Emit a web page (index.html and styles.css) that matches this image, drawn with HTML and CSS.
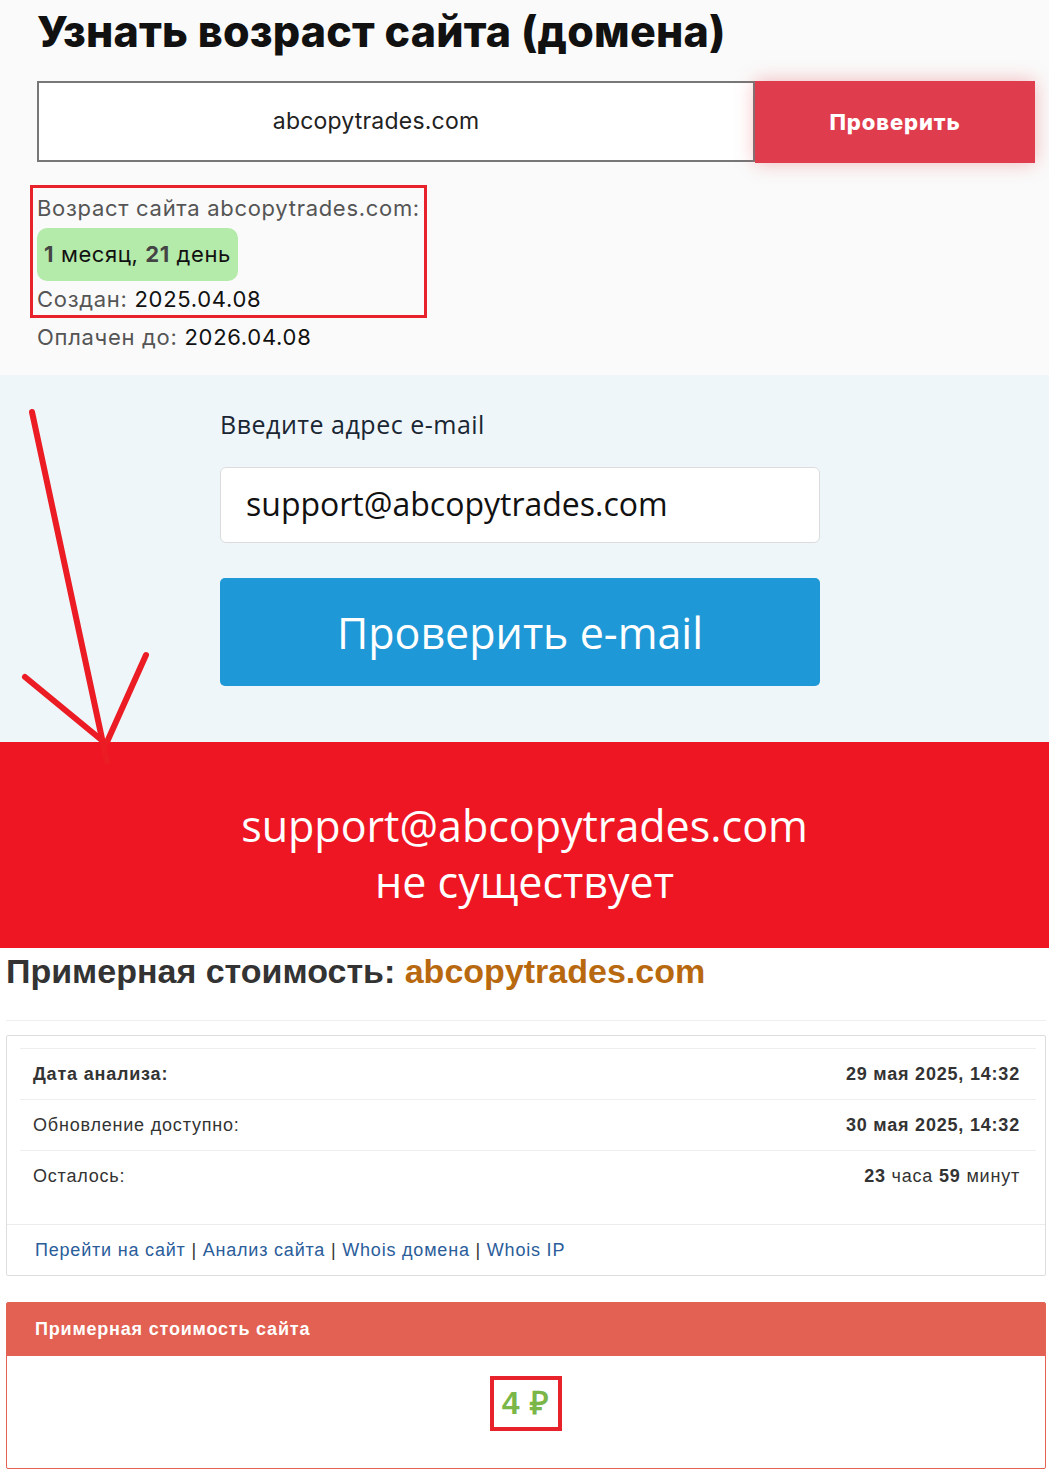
FILE: index.html
```html
<!DOCTYPE html>
<html lang="ru">
<head>
  <meta charset="UTF-8">
  <meta name="viewport" content="width=device-width, initial-scale=1.0">
  <title>Узнать возраст сайта</title>
  <link rel="stylesheet" href="styles.css">
</head>
<body>
  <div class="page">
    <section class="age-section">
      <h1>Узнать возраст сайта (домена)</h1>
      <div class="domain-form">
        <div class="domain-input">abcopytrades.com</div>
        <button class="domain-btn">Проверить</button>
      </div>
      <div class="age-result">
        <div class="age-line">Возраст сайта abcopytrades.com:</div>
        <div class="age-pill"><b>1</b> месяц, <b>21</b> день</div>
        <div class="age-line">Создан: <span class="val">2025.04.08</span></div>
      </div>
      <div class="age-line paid">Оплачен до: <span class="val">2026.04.08</span></div>
    </section>

    <section class="email-section">
      <div class="email-form">
        <div class="email-label">Введите адрес e-mail</div>
        <div class="email-input">support@abcopytrades.com</div>
        <button class="email-btn">Проверить e-mail</button>
      </div>
    </section>

    <section class="email-result">
      <div>support@abcopytrades.com</div>
      <div>не существует</div>
    </section>

    <section class="valuation">
      <h2>Примерная стоимость: <span class="domain">abcopytrades.com</span></h2>
      <hr class="divider">
      <div class="info-card">
        <div class="info-rows">
          <div class="info-row head"><span>Дата анализа:</span><span class="right">29 мая 2025, 14:32</span></div>
          <div class="info-row"><span>Обновление доступно:</span><span class="right">30 мая 2025, 14:32</span></div>
          <div class="info-row"><span>Осталось:</span><span class="right"><b>23</b> часа <b>59</b> минут</span></div>
        </div>
        <div class="info-links">
          <a href="#">Перейти на сайт</a> | <a href="#">Анализ сайта</a> | <a href="#">Whois домена</a> | <a href="#">Whois IP</a>
        </div>
      </div>

      <div class="price-panel">
        <div class="price-head">Примерная стоимость сайта</div>
        <div class="price-body">
          <span class="price">4 ₽</span>
        </div>
      </div>
    </section>

    <!-- стрелка поверх блоков -->
    <svg class="arrow" width="170" height="390" viewBox="0 0 170 390">
      <g stroke="#ec1c24" stroke-width="6" stroke-linecap="round" fill="none">
        <line x1="32" y1="32" x2="107" y2="382"/>
        <line x1="25" y1="297" x2="104" y2="362"/>
        <line x1="146" y1="275" x2="107" y2="362"/>
      </g>
    </svg>
  </div>
</body>
</html>
```

FILE: styles.css
```css
body {
  margin: 0;
  background-color: #fff;
}
.page {
  position: relative;
  width: 1049px;
}
.age-section {
  background-color: #fafafa;
  padding: 0 0 0 37px;
  height: 375px;
  box-sizing: border-box;
  font-family: Inter, "Open Sans", sans-serif;
  overflow: hidden;
}
h1 {
  margin: 0;
  padding-top: 3px;
  font-size: 43px;
  line-height: 56px;
  font-weight: 800;
  color: #111;
  letter-spacing: 0.2px;
}
.domain-form {
  display: flex;
  margin-top: 22px;
}
.domain-input {
  flex-shrink: 0;
  width: 718px;
  height: 81px;
  box-sizing: border-box;
  padding-right: 40px;
  border: 2px solid #777;
  background-color: #fff;
  text-align: center;
  font-size: 23px;
  letter-spacing: 0.2px;
  line-height: 77px;
  color: #222;
}
.domain-btn {
  flex-shrink: 0;
  width: 280px;
  height: 82px;
  border: none;
  background-color: #df3d4d;
  color: #fff;
  font-family: Inter, sans-serif;
  font-size: 22px;
  font-weight: 800;
  letter-spacing: 0.9px;
  box-shadow: 0 0 18px rgba(230, 60, 70, 0.35);
}
.age-result {
  display: inline-block;
  margin: 22px 0 0 -7px;
  padding: 6px 4px 2px 4px;
  border: 3px solid #e8222b;
}
.age-line {
  font-size: 22px;
  letter-spacing: 0.7px;
  line-height: 28px;
  color: #555;
}
.age-line .val {
  color: #111;
}
.age-pill {
  display: inline-block;
  margin: 6px 0 4px;
  padding: 0 7px;
  height: 53px;
  line-height: 53px;
  background-color: #b4eaaa;
  border-radius: 10px;
  font-size: 22px;
  letter-spacing: 0.6px;
  color: #111;
}
.age-pill b {
  color: #444;
}
.paid {
  margin-top: 5px;
}
.email-section {
  background-color: #eef6fa;
  height: 367px;
  padding-top: 34px;
  box-sizing: border-box;
}
.email-form {
  width: 600px;
  margin-left: 220px;
  font-family: "Open Sans", sans-serif;
}
.email-label {
  font-size: 25px;
  letter-spacing: 0.5px;
  line-height: 30px;
  color: #1a2633;
}
.email-input {
  margin-top: 28px;
  height: 76px;
  box-sizing: border-box;
  background-color: #fff;
  border: 1px solid #dcdcdc;
  border-radius: 6px;
  padding-left: 25px;
  font-size: 32px;
  line-height: 72px;
  color: #111;
}
.email-btn {
  margin-top: 35px;
  width: 600px;
  height: 108px;
  border: none;
  border-radius: 5px;
  background-color: #1e98d6;
  color: #fff;
  font-family: "Open Sans", sans-serif;
  font-size: 43px;
}
.email-result {
  background-color: #ee1622;
  height: 206px;
  padding-top: 56px;
  box-sizing: border-box;
  text-align: center;
  color: #fff;
  font-family: "Open Sans", sans-serif;
  font-size: 43px;
  line-height: 56px;
}
.valuation {
  font-family: "Liberation Sans", Arial, sans-serif;
  padding: 0 3px 0 6px;
}
.valuation h2 {
  margin: 0;
  padding-top: 5px;
  font-size: 34px;
  line-height: 36px;
  color: #333;
}
.valuation .domain {
  color: #b8690f;
}
.divider {
  margin: 31px 0 14px;
  border: none;
  border-top: 1px solid #eee;
}
.info-card {
  border: 1px solid #ddd;
  border-radius: 2px;
  font-size: 18px;
  letter-spacing: 0.8px;
  color: #333;
}
.info-rows {
  padding: 12px 9px 23px 13px;
}
.info-row {
  display: flex;
  justify-content: space-between;
  padding: 0 16px 0 13px;
  height: 50px;
  line-height: 50px;
  border-top: 1px solid #eee;
}
.info-row.head {
  font-weight: bold;
}
.info-row .right {
  font-weight: bold;
}
.info-row:last-child .right {
  font-weight: normal;
}
.info-row:last-child .right b {
  font-weight: bold;
}
.info-links {
  border-top: 1px solid #ececec;
  padding: 0 28px;
  height: 50px;
  line-height: 50px;
  color: #333;
}
.info-links a {
  color: #2a5d9a;
  text-decoration: none;
}
.price-panel {
  margin-top: 26px;
  border: 1px solid #e36152;
  border-radius: 2px;
}
.price-head {
  background-color: #e36152;
  color: #fff;
  font-weight: bold;
  font-size: 18px;
  letter-spacing: 0.8px;
  height: 53px;
  line-height: 53px;
  padding-left: 28px;
}
.price-body {
  height: 112px;
  text-align: center;
  padding-top: 20px;
  box-sizing: border-box;
}
.price {
  display: inline-block;
  border: 4px solid #e8222b;
  padding: 0 8px;
  height: 47px;
  line-height: 47px;
  font-size: 32px;
  letter-spacing: 1px;
  font-weight: bold;
  color: #7ab648;
}
.arrow {
  position: absolute;
  left: 0;
  top: 380px;
}
```
